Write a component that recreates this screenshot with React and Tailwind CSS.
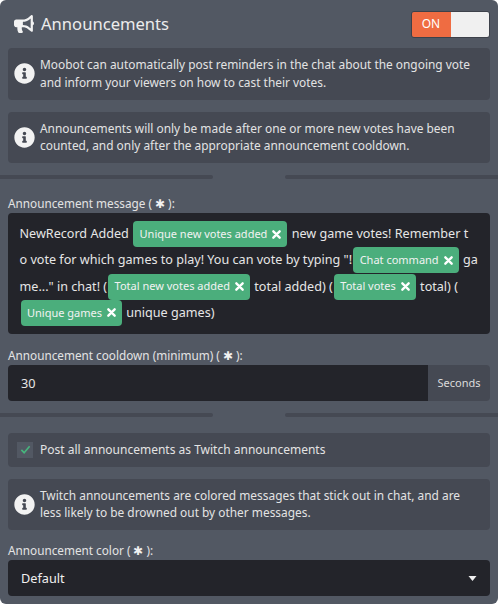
import React from 'react';
import { FaBullhorn, FaInfoCircle } from 'react-icons/fa';

const font = { fontFamily: '"Noto Sans", sans-serif' };

const Info = ({ children }) => (
    <div className="flex items-center gap-[5px] h-[51.5px] pl-[6px] pr-2 bg-[#454953] rounded text-[11.9px] leading-[17.5px] text-[#e3e3e3]">
        <FaInfoCircle className="w-[21px] h-[21px] shrink-0 text-[#f2f2f2]" />
        <div>{children}</div>
    </div>
);

const Divider = () => (
    <div className="flex justify-between">
        <div className="w-[213px] h-1 bg-[#454953] rounded-r" />
        <div className="w-[213px] h-1 bg-[#454953] rounded-l" />
    </div>
);

const Tag = ({ children }) => (
    <span className="inline-flex items-center gap-[5px] h-[26px] pl-[6.5px] pr-[6px] mx-[1px] bg-[#4bae7c] rounded-sm text-[11px] text-[#f2f2f2] align-top break-normal whitespace-nowrap">
        {children}
        <svg viewBox="0 0 10 10" className="w-[9px] h-[9px]">
            <path d="M1.500 1.500l7 7M8.500 1.500l-7 7" stroke="#fff" strokeWidth="2.600" strokeLinecap="round" />
        </svg>
    </span>
);

const Label = ({ children }) => (
    <div className="text-[11.75px] leading-[17px] text-[#e3e3e3]">
        {children} ( <span className="text-[#f2f2f2]">✱</span> ):
    </div>
);

export default function App() {
    return (
        <div style={font} className="w-[498px] h-[604px] overflow-hidden bg-[#525863] rounded-md">
            <div className="flex items-center justify-between h-[48px] pl-[14px] pr-[8.5px]">
                <div className="flex items-center gap-[7px]">
                    <FaBullhorn className="w-[20px] h-[20px] text-[#f2f2f2]" />
                    <span className="text-[16.6px] text-[#ececec]">Announcements</span>
                </div>
                <div className="flex w-[79px] h-[27px] rounded-[3px] border border-[#3d414a] overflow-hidden text-[12px]">
                    <div className="w-[39px] flex items-center justify-center bg-[#ef6c42] text-white">ON</div>
                    <div className="flex-1 bg-[#f0f0f0]" />
                </div>
            </div>
            <div className="px-2">
                <Info>Moobot can automatically post reminders in the chat about the ongoing vote and inform your viewers on how to cast their votes.</Info>
                <div className="h-3" />
                <Info>Announcements will only be made after one or more new votes have been counted, and only after the appropriate announcement cooldown.</Info>
            </div>
            <div className="mt-[12px] mb-[16px]"><Divider /></div>
            <div className="px-2">
                <Label>Announcement message</Label>
                <div className="mt-[1px] bg-[#23242a] rounded pl-[11.5px] pr-2 py-2 text-[12.6px] leading-[26.3px] text-[#e6e6e6] break-all">
                    NewRecord Added <Tag>Unique new votes added</Tag> new game votes! Remember t<br />
                    o vote for which games to play! You can vote by typing "!<Tag>Chat command</Tag> ga<br />
                    me..." in chat! (<Tag>Total new votes added</Tag> total added) (<Tag>Total votes</Tag> total) (<br />
                    <Tag>Unique games</Tag> unique games)
                </div>
                <div className="mt-[13px]">
                    <Label>Announcement cooldown (minimum)</Label>
                </div>
                <div className="mt-[1px] flex h-9 rounded overflow-hidden">
                    <div className="flex-1 flex items-center pl-[13px] bg-[#23242a] text-[12.7px] text-[#e6e6e6]">30</div>
                    <div className="w-[62px] flex items-center justify-center bg-[#454953] text-[11px] text-[#dcdcdc]">Seconds</div>
                </div>
            </div>
            <div className="mt-[12px] mb-[16px]"><Divider /></div>
            <div className="px-2">
                <div className="flex items-center gap-[7px] h-[33.5px] pl-[9px] bg-[#454953] rounded text-[12px] text-[#e3e3e3]">
                    <div className="w-[16px] h-[16px] bg-[#525863] flex items-center justify-center">
                        <svg viewBox="0 0 12 12" className="w-[11px] h-[11px]">
                            <path d="M1.500 6.500l3 3 6-7" fill="none" stroke="#47b57d" strokeWidth="1.800" />
                        </svg>
                    </div>
                    Post all announcements as Twitch announcements
                </div>
                <div className="h-3" />
                <Info>Twitch announcements are colored messages that stick out in chat, and are less likely to be drowned out by other messages.</Info>
                <div className="mt-[12px]">
                    <Label>Announcement color</Label>
                </div>
                <div className="mt-[1px] flex items-center justify-between h-9 pl-[13px] pr-[13px] bg-[#23242a] rounded text-[12.7px] text-[#f0f0f0]">
                    Default
                    <svg viewBox="0 0 8 5" className="w-[9px] h-[5px]"><path d="M0 0h8L4 5z" fill="#f0f0f0" /></svg>
                </div>
            </div>
        </div>
    );
}
